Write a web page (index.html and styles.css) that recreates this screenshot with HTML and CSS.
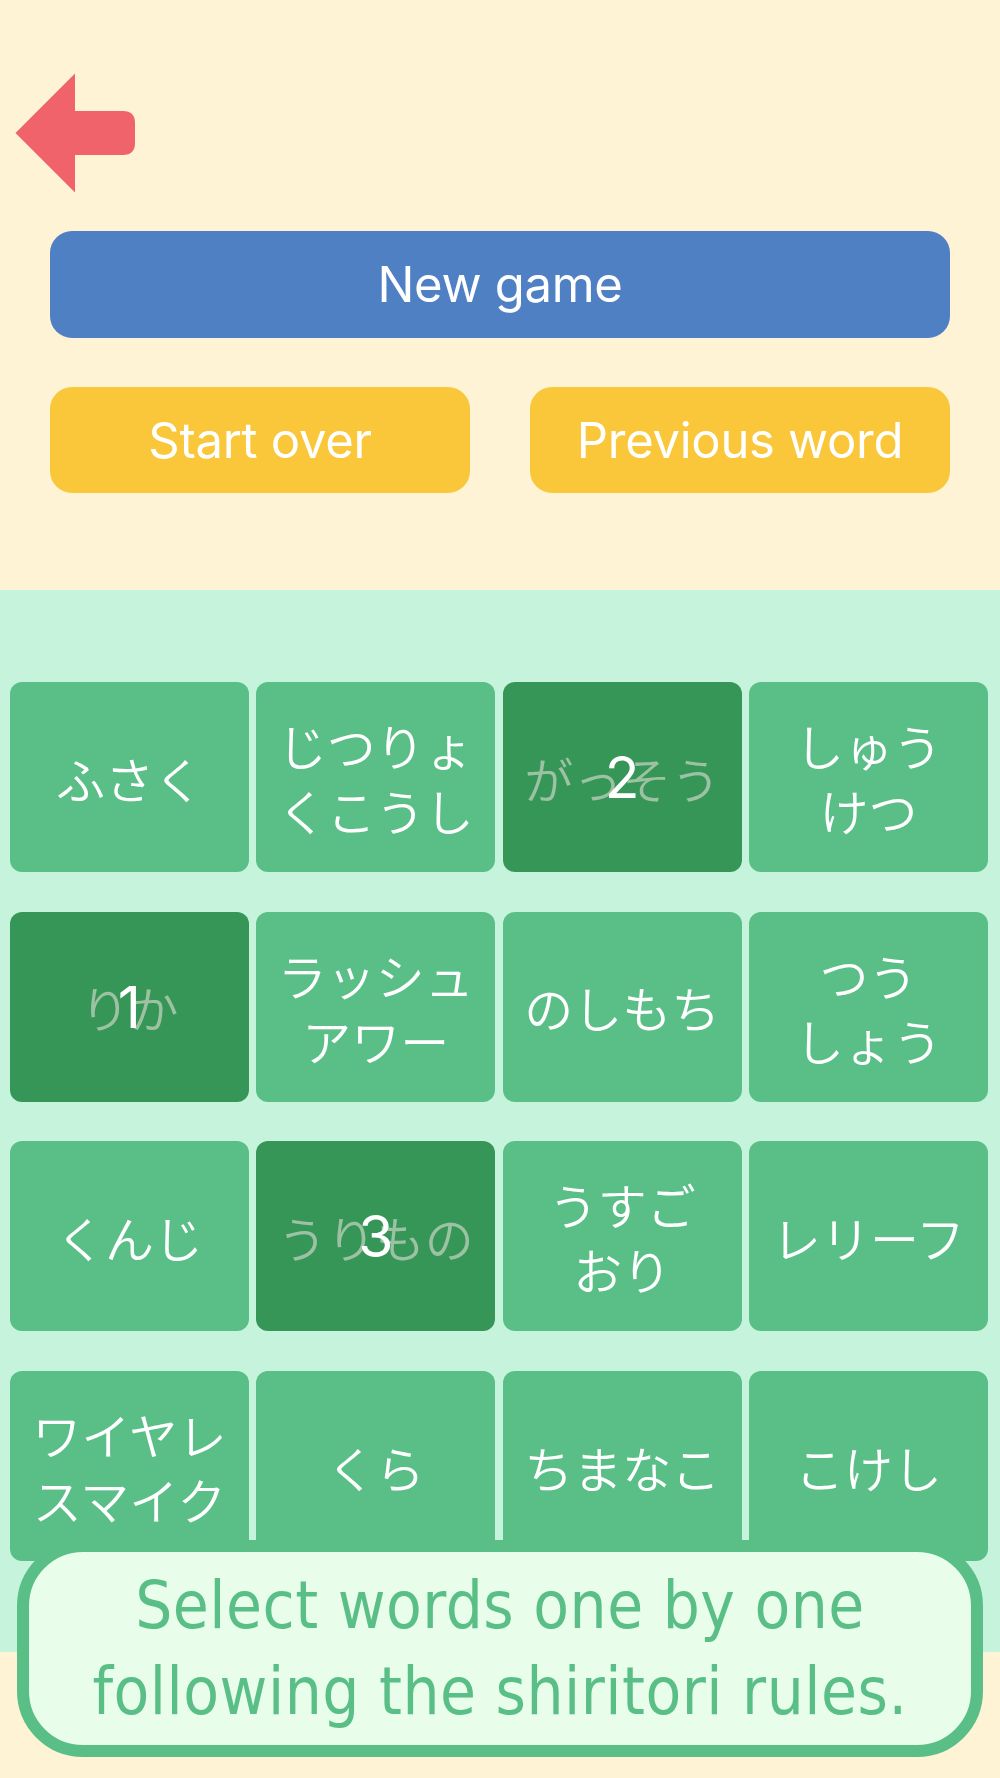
FILE: index.html
```html
<!DOCTYPE html>
<html lang="ja">
<head>
<meta charset="utf-8">
<title>Shiritori</title>
<link rel="stylesheet" href="styles.css">
</head>
<body>
<div class="page">
  <section class="top">
    <div class="back">
      <svg class="back-icon" width="121" height="120" viewBox="0 0 121 120" aria-label="Back">
        <path d="M0.5 60 L60 0.5 L60 38 L108 38 Q120 38 120 50 L120 70 Q120 82 108 82 L60 82 L60 119.5 Z" fill="#F0636B"/>
      </svg>
    </div>
    <button class="btn btn-blue">New game</button>
    <div class="btn-row">
      <button class="btn btn-yellow">Start over</button>
      <button class="btn btn-yellow">Previous word</button>
    </div>
  </section>

  <section class="board">
    <div class="grid">
      <div class="tile"><span class="word">ふさく</span></div>
      <div class="tile"><span class="word">じつりょ<br>くこうし</span></div>
      <div class="tile tile-used"><span class="word">がっそう</span><span class="num">2</span></div>
      <div class="tile"><span class="word">しゅう<br>けつ</span></div>

      <div class="tile tile-used"><span class="word">りか</span><span class="num">1</span></div>
      <div class="tile"><span class="word">ラッシュ<br>アワー</span></div>
      <div class="tile"><span class="word">のしもち</span></div>
      <div class="tile"><span class="word">つう<br>しょう</span></div>

      <div class="tile"><span class="word">くんじ</span></div>
      <div class="tile tile-used"><span class="word">うりもの</span><span class="num">3</span></div>
      <div class="tile"><span class="word">うすご<br>おり</span></div>
      <div class="tile"><span class="word">レリーフ</span></div>

      <div class="tile"><span class="word">ワイヤレ<br>スマイク</span></div>
      <div class="tile"><span class="word">くら</span></div>
      <div class="tile"><span class="word">ちまなこ</span></div>
      <div class="tile"><span class="word">こけし</span></div>
    </div>
  </section>

  <section class="bottom"></section>

  <div class="message">
    <p class="message-text">Select words one by one<br>following the shiritori rules.</p>
  </div>
</div>
</body>
</html>
```

FILE: styles.css
```css
html, body {
  margin: 0;
  padding: 0;
}

body {
  background: #FFF3D5;
  font-family: Inter, "Noto Sans", "Noto Sans CJK JP", sans-serif;
}

.page {
  position: relative;
  width: 1000px;
  height: 1778px;
  overflow: hidden;
}

.top {
  box-sizing: border-box;
  height: 590px;
  background: #FFF3D5;
  padding: 73px 50px 0 50px;
  display: flex;
  flex-direction: column;
}

.back {
  margin-left: -35px;
  height: 120px;
  margin-bottom: 38px;
}

.back-icon {
  display: block;
}

.btn {
  border: none;
  margin: 0;
  padding: 0;
  color: #FFFFFF;
  font-family: Inter, "Noto Sans", sans-serif;
  font-size: 49px;
  font-weight: 400;
  letter-spacing: -0.3px;
  border-radius: 22px;
  height: 107px;
  cursor: pointer;
}

.btn-blue {
  width: 100%;
  background: #4F80C4;
}

.btn-row {
  margin-top: 49px;
  display: flex;
  gap: 60px;
}

.btn-yellow {
  flex: 1;
  height: 106px;
  background: #FAC63A;
}

.board {
  box-sizing: border-box;
  height: 1062px;
  background: #C6F3DB;
  padding: 92px 12px 0 10px;
}

.grid {
  display: grid;
  grid-template-columns: repeat(4, 1fr);
  grid-auto-rows: 190px;
  column-gap: 7.5px;
  row-gap: 39.7px;
}

.tile {
  position: relative;
  background: #59BF87;
  border-radius: 12px;
  display: flex;
  align-items: center;
  justify-content: center;
  text-align: center;
}

.word {
  color: #FFFFFF;
  font-family: "Noto Sans CJK JP", sans-serif;
  font-weight: 350;
  font-size: 49px;
  line-height: 65px;
  white-space: nowrap;
}

.tile-used {
  background: #369657;
}

.tile-used .word {
  color: #9DC2A3;
}

.num {
  position: absolute;
  left: 0;
  right: 0;
  top: 50%;
  transform: translateY(-50%);
  color: #FFFFFF;
  font-family: Inter, "Noto Sans", sans-serif;
  font-size: 57px;
  line-height: 1;
  text-align: center;
}

.bottom {
  height: 126px;
  background: #FFF3D5;
}

.message {
  position: absolute;
  left: 17px;
  top: 1540px;
  width: 966px;
  height: 217px;
  box-sizing: border-box;
  border: 12px solid #59BF87;
  border-radius: 66px;
  background: #E8FDEA;
  display: flex;
  align-items: center;
  justify-content: center;
}

.message-text {
  margin: 0;
  color: #59BF87;
  font-family: "DejaVu Sans", Verdana, sans-serif;
  font-stretch: condensed;
  font-size: 65px;
  line-height: 86px;
  letter-spacing: 0.5px;
  text-align: center;
}
```
